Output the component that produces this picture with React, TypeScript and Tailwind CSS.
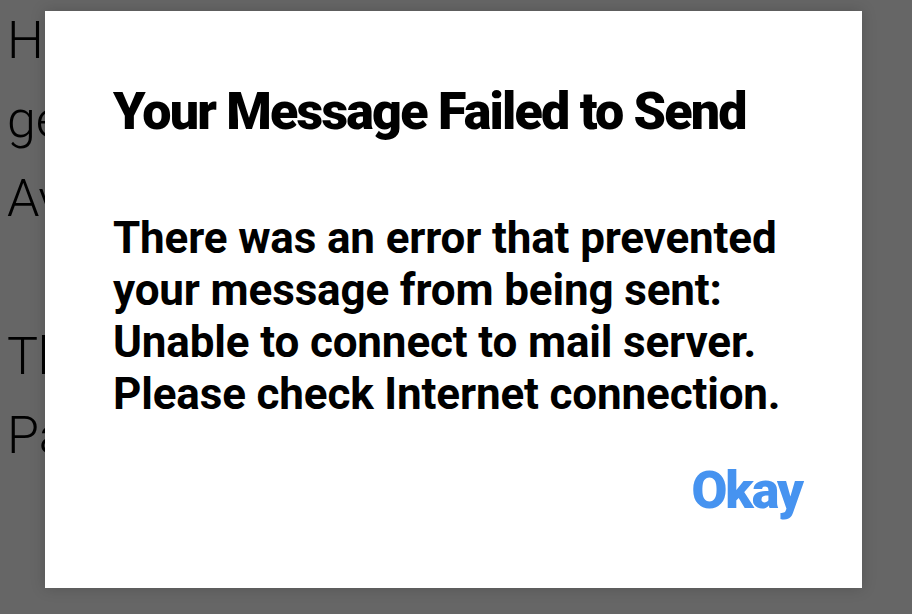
import React from "react";

export default function App() {
  const bgLines = ["He", "ge", "Av", "", "Th", "Pa"];
  return (
    <div className="relative w-[912px] h-[614px] overflow-hidden bg-white" style={{ fontFamily: "Roboto, 'Liberation Sans', sans-serif" }}>
      <div className="pl-[7px] pt-[1px] flex flex-col text-[52px] leading-[79px] text-black whitespace-nowrap font-light">
        {bgLines.map((l, i) => (
          <div key={i} className="h-[79px]">{l}</div>
        ))}
      </div>
      <div className="absolute inset-0 bg-black/60 pl-[45px] pt-[11px]">
        <div className="w-[817px] h-[577px] bg-white shadow-[0_0_14px_rgba(0,0,0,0.18)] pl-[68px] pr-[60px] pt-[75px] flex flex-col">
          <h1 className="text-[52px] leading-[52px] font-black tracking-[-1.8px] text-black">Your Message Failed to Send</h1>
          <p className="mt-[74px] text-[44px] leading-[52px] font-bold tracking-[-0.15px] text-black">
            There was an error that prevented<br />
            your message from being sent:<br />
            Unable to connect to mail server.<br />
            Please check Internet connection.
          </p>
          <div className="mt-[45px] flex justify-end">
            <button className="text-[52px] leading-[52px] font-black tracking-[-2px] text-[#4693f0]">Okay</button>
          </div>
        </div>
      </div>
    </div>
  );
}
